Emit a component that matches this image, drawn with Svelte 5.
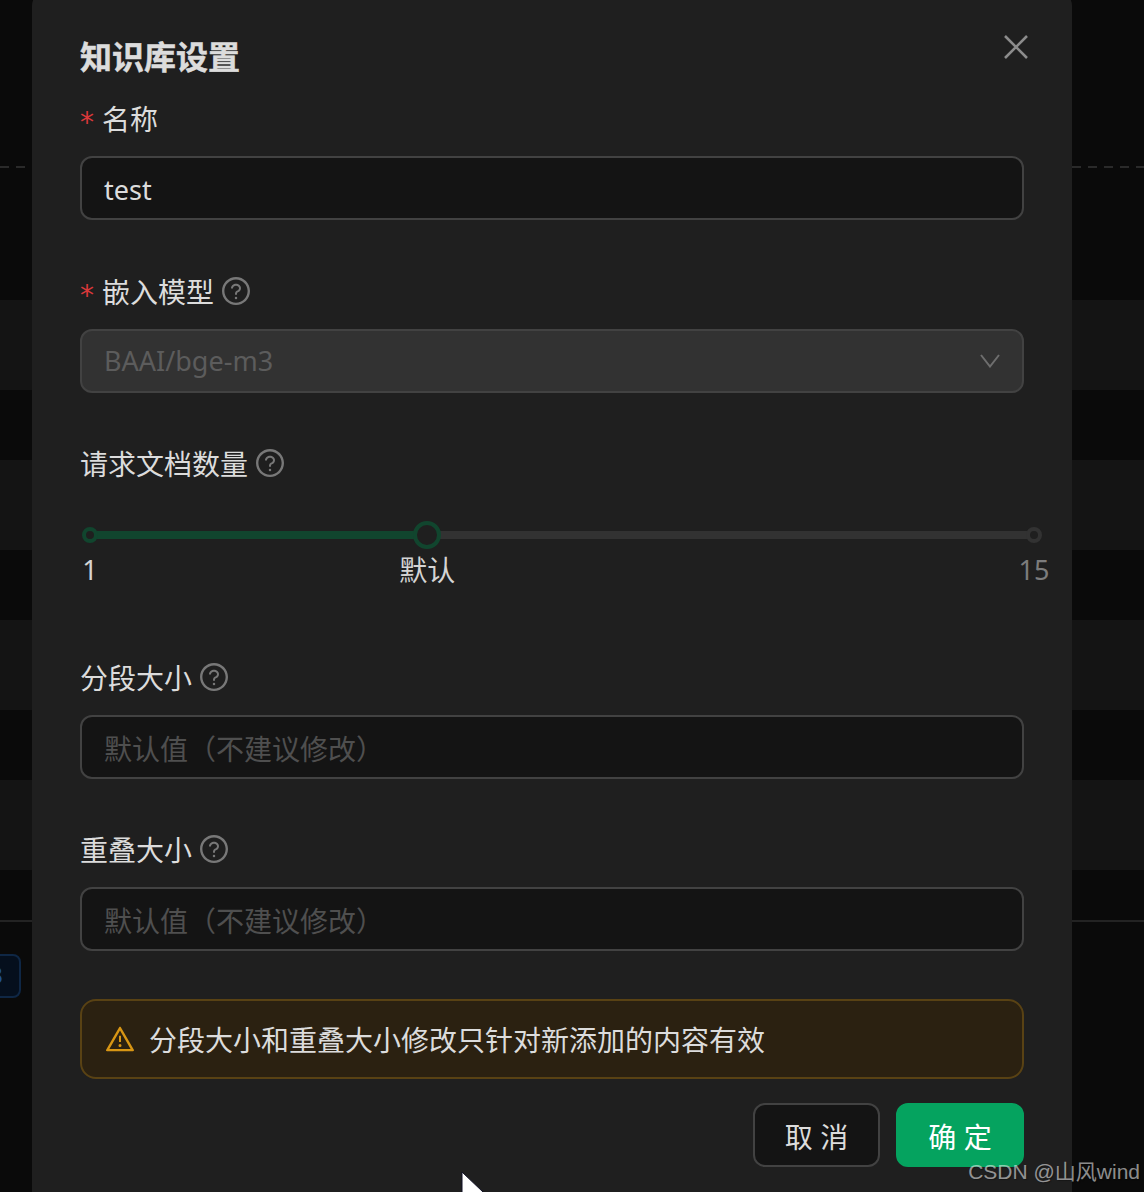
<script>
  const rows = [1, 2, 3, 4];
  const min = 1;
  const max = 15;
  const value = 6;
  const pct = ((value - min) / (max - min)) * 100;
  const helpOuter = 'M512 64C264.6 64 64 264.6 64 512s200.6 448 448 448 448-200.6 448-448S759.4 64 512 64zm0 820c-205.4 0-372-166.6-372-372s166.6-372 372-372 372 166.6 372 372-166.6 372-372 372z';
  const helpInner = 'M623.6 316.7C593.6 290.4 554 276 512 276s-81.6 14.5-111.6 40.7C369.2 344 352 380.7 352 420v7.6c0 4.4 3.6 8 8 8h48c4.4 0 8-3.6 8-8V420c0-44.1 43.1-80 96-80s96 35.9 96 80c0 31.1-22 59.6-56.1 72.7-21.2 8.1-39.2 22.3-52.1 40.9-13.1 19-19.9 41.8-19.9 64.9V620c0 4.4 3.6 8 8 8h48c4.4 0 8-3.6 8-8v-22.7a48.3 48.3 0 0130.9-44.8c59-22.7 97.1-74.7 97.1-132.5.1-39.3-17.1-76-48.3-103.3zM472 732a40 40 0 1080 0 40 40 0 10-80 0z';
</script>

{#snippet help()}
  <svg class="help" viewBox="0 0 1024 1024" fill="currentColor"><path d={helpOuter} /><path d={helpInner} /></svg>
{/snippet}

<div class="page">
  <!-- table behind the modal mask -->
  <div class="backdrop">
    <div class="top"></div>
    {#each rows as r}
      <div class="row"></div>
      {#if r < 4}<div class="gap"></div>{/if}
    {/each}
    <div class="tail"></div>
    <div class="bottom"><span class="tag">3</span></div>
  </div>

  <div class="modal">
    <h2>知识库设置</h2>
    <svg class="close" viewBox="0 0 24 24" fill="none" stroke="currentColor" stroke-width="2.6"><path d="M1 1l22 22M23 1L1 23" /></svg>

    <div class="item first">
      <div class="label"><span class="req">*</span>名称</div>
      <div class="input value">test</div>
    </div>

    <div class="item">
      <div class="label"><span class="req">*</span>嵌入模型{@render help()}</div>
      <div class="input disabled">
        BAAI/bge-m3
        <svg class="chevron" viewBox="0 0 20 14" fill="none" stroke="currentColor" stroke-width="2"><path d="M1 1l9 11.5L19 1" /></svg>
      </div>
    </div>

    <div class="item">
      <div class="label">请求文档数量{@render help()}</div>
      <div class="slider">
        <div class="rail"></div>
        <div class="track" style="width: {pct}%"></div>
        <span class="dot on" style="left: 0%"></span>
        <span class="dot" style="left: 100%"></span>
        <span class="handle" style="left: {pct}%"></span>
        <span class="mark active" style="left: 0%">1</span>
        <span class="mark active cjk" style="left: {pct}%">默认</span>
        <span class="mark" style="left: 100%">15</span>
      </div>
    </div>

    <div class="item">
      <div class="label">分段大小{@render help()}</div>
      <div class="input placeholder">默认值（不建议修改）</div>
    </div>

    <div class="item">
      <div class="label">重叠大小{@render help()}</div>
      <div class="input placeholder">默认值（不建议修改）</div>
    </div>

    <div class="alert">
      <svg viewBox="0 0 1024 1024" fill="currentColor"><path d="M464 720a48 48 0 1096 0 48 48 0 10-96 0zm16-304v184c0 4.4 3.6 8 8 8h48c4.4 0 8-3.6 8-8V416c0-4.4-3.6-8-8-8h-48c-4.4 0-8 3.6-8 8zm475.7 440l-416-720c-6.2-10.7-16.9-16-27.7-16s-21.6 5.3-27.7 16l-416 720C56 877.4 71.4 904 96 904h832c24.6 0 40-26.6 27.7-48zm-783.5-27.9L512 239.9l339.8 588.2H172.2z" /></svg>
      <span>分段大小和重叠大小修改只针对新添加的内容有效</span>
    </div>

    <div class="footer">
      <button class="btn">取 消</button>
      <button class="btn primary">确 定</button>
    </div>
  </div>

  <svg class="cursor" viewBox="0 0 24 30"><path d="M1 0v30L22 20z" fill="#fff" stroke="#111126" stroke-width="1" /></svg>
  <div class="watermark">CSDN @山风wind</div>
</div>

<style>
  :global(body) {
    background: #0a0a0a;
  }

  .page {
    position: relative;
    width: 1144px;
    height: 1192px;
    overflow: hidden;
    font-family: "Noto Sans", "Noto Sans CJK SC", sans-serif;
    font-size: 28px;
    color: #dcdcdc;
  }

  .backdrop {
    background: #0a0a0a;
  }

  .top {
    height: 300px;
    background: linear-gradient(90deg, #2a2a2a 9px, transparent 9px) 0 166px / 16px 2px repeat-x;
  }

  .row {
    height: 90px;
    background: #141414;
  }

  .gap {
    height: 70px;
  }

  .tail {
    height: 50px;
    border-bottom: 2px solid #232323;
  }

  .bottom {
    padding-top: 32px;
  }

  .tag {
    display: block;
    margin-left: -30px;
    width: 51px;
    height: 44px;
    box-sizing: border-box;
    border: 2px solid #0f2745;
    border-radius: 8px;
    background: #050f1d;
    color: #1f4f96;
    font-size: 24px;
    line-height: 38px;
    text-align: right;
    padding-right: 16px;
  }

  .modal {
    position: absolute;
    left: 32px;
    top: -10px;
    width: 1040px;
    height: 1300px;
    box-sizing: border-box;
    padding: 45px 48px 0;
    background: #1f1f1f;
    border-radius: 16px;
  }

  h2 {
    margin: 0;
    font-size: 32px;
    line-height: 44px;
    font-weight: 700;
    color: #dcdcdc;
    height: 61px;
    -webkit-text-stroke: 0.5px #dcdcdc;
  }

  .close {
    position: absolute;
    right: 44px;
    top: 45px;
    width: 24px;
    height: 24px;
    color: #8c8c8c;
  }

  .item {
    margin-bottom: 48px;
  }

  .item.first {
    margin-bottom: 49px;
  }

  .label {
    display: flex;
    align-items: center;
    height: 44px;
    margin-bottom: 16px;
    line-height: 44px;
    padding-top: 2px;
    box-sizing: border-box;
  }

  .req {
    width: 22px;
    padding-top: 8px;
    color: #d9383a;
    font-family: "DejaVu Sans", sans-serif;
    font-size: 28px;
    line-height: 30px;
  }

  .help {
    width: 32px;
    height: 32px;
    margin-left: 6px;
    margin-top: -2px;
    color: #787878;
  }

  .input {
    display: flex;
    align-items: center;
    justify-content: space-between;
    box-sizing: border-box;
    height: 64px;
    padding: 0 22px;
    background: #141414;
    border: 2px solid #424242;
    border-radius: 12px;
    line-height: 60px;
  }

  .input.value {
    font-size: 27px;
    padding-top: 3px;
  }

  .input.disabled {
    font-size: 27px;
    background: #323232;
    color: #5c5c5c;
    line-height: 62px;
  }

  .chevron {
    width: 20px;
    height: 14px;
    color: #6e6e6e;
  }

  .input.placeholder {
    color: #4f4f4f;
    padding-top: 3px;
  }

  .slider {
    position: relative;
    height: 106px;
    margin-left: 10px;
    width: 944px;
  }

  .rail,
  .track {
    position: absolute;
    left: 0;
    top: 30px;
    height: 8px;
    border-radius: 4px;
  }

  .rail {
    width: 100%;
    background: #323232;
  }

  .track {
    background: #11452e;
  }

  .dot,
  .handle {
    position: absolute;
    box-sizing: border-box;
    border-radius: 50%;
    background: #1f1f1f;
    transform: translate(-50%, -50%);
    top: 34px;
  }

  .dot {
    width: 16px;
    height: 16px;
    border: 4px solid #323232;
  }

  .dot.on {
    border-color: #11452e;
  }

  .handle {
    width: 28px;
    height: 28px;
    border: 4px solid #11452e;
  }

  .mark {
    position: absolute;
    top: 47px;
    line-height: 44px;
    font-size: 27px;
    transform: translateX(-50%);
    color: #7c7c7c;
    white-space: nowrap;
  }

  .mark.active {
    color: #d4d4d4;
  }

  .mark.cjk {
    font-size: 28px;
  }

  .alert {
    display: flex;
    align-items: center;
    gap: 13px;
    box-sizing: border-box;
    height: 80px;
    padding: 0 22px;
    background: #2b2111;
    border: 2px solid #594214;
    border-radius: 16px;
  }

  .alert svg {
    width: 32px;
    height: 32px;
    color: #d89614;
    flex: none;
  }

  .footer {
    display: flex;
    justify-content: flex-end;
    gap: 16px;
    margin-top: 24px;
  }

  .btn {
    box-sizing: border-box;
    height: 64px;
    width: 127px;
    padding: 2px 0 0;
    font: inherit;
    color: #dcdcdc;
    background: #141414;
    border: 2px solid #424242;
    border-radius: 12px;
  }

  .btn.primary {
    width: 128px;
    background: #05a35f;
    border-color: #05a35f;
    color: #fff;
  }

  .cursor {
    position: absolute;
    left: 461px;
    top: 1172px;
    width: 24px;
    height: 30px;
  }

  .watermark {
    position: absolute;
    right: 4px;
    top: 1156px;
    font-family: "Liberation Sans", "Noto Sans CJK SC", sans-serif;
    font-size: 21px;
    line-height: 32px;
    color: rgba(255, 255, 255, 0.55);
    text-shadow: 1px 1px 1px rgba(0, 0, 0, 0.3);
  }
</style>
